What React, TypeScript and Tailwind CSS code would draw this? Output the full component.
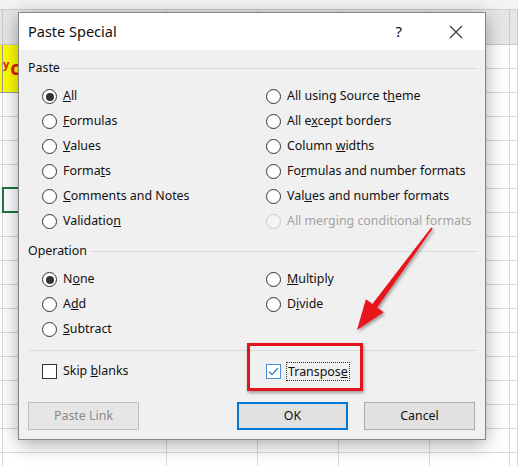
import React from 'react'

const COLS = [3, 164, 91, 81, 91, 80, 8]
const ROWS = 18

function Radio({
  checked = false,
  disabled = false,
  children,
}: {
  checked?: boolean
  disabled?: boolean
  children: React.ReactNode
}) {
  return (
    <div className="flex h-[25px] items-center">
      <span
        className={`flex h-[15px] w-[15px] items-center justify-center rounded-full border ${
          disabled ? 'border-[#cccccc] bg-[#f4f4f4]' : 'border-[#333333] bg-white'
        }`}
      >
        {checked && <span className="h-[8px] w-[8px] rounded-full bg-[#333333]" />}
      </span>
      <span className={`ml-[6px] ${disabled ? 'text-[#a3a3a3]' : 'text-[#111]'}`}>{children}</span>
    </div>
  )
}

function Section({ label }: { label: string }) {
  return (
    <div className="flex h-[18px] items-center">
      <span>{label}</span>
      <div className="ml-[4px] h-px flex-1 bg-[#dcdcdc]" />
    </div>
  )
}

function Sheet() {
  return (
    <div className="flex">
      {COLS.map((w, c) => (
        <div key={c} className="flex flex-col" style={{ width: w }}>
          <div className="h-[10px] border-b border-[#cfcfcf] bg-[#f3f3f3]" />
          <div className="h-[35px] border-r border-b border-[#c8c8c8] bg-[#e6e6e6]" />
          {Array.from({ length: ROWS }).map((_, r) => {
            if ((c === 0 || c === 1) && r === 1) return null
            if ((c === 0 || c === 1) && r === 0) {
              return (
                <div
                  key={r}
                  className="flex h-[48px] items-center overflow-hidden border-r border-b border-[#9a9a9a] bg-[#ffff00]"
                >
                  {c === 1 && (
                    <span className="flex items-center leading-none font-bold whitespace-nowrap text-[#e8190f]">
                      <span className="relative -top-[5px] text-[11px]">y</span>
                      <span className="ml-[1px] text-[19px]">c</span>
                    </span>
                  )}
                </div>
              )
            }
            return (
              <div key={r} className="relative h-[24px] shrink-0 border-r border-b border-[#dadada]">
                {c === 1 && r === 6 && (
                  <div className="absolute -top-[2px] -left-[1px] h-[26px] w-[166px] border-2 border-[#217346]" />
                )}
              </div>
            )
          })}
        </div>
      ))}
    </div>
  )
}

function Button({
  children,
  disabled = false,
  primary = false,
}: {
  children: React.ReactNode
  disabled?: boolean
  primary?: boolean
}) {
  return (
    <div
      className={`flex h-[28px] w-[111px] items-center justify-center ${
        primary
          ? 'border-2 border-[#0078d7] bg-[#e1e1e1] text-[#111]'
          : disabled
            ? 'border border-[#bfbfbf] bg-[#e6e6e6] text-[#8a8a8a]'
            : 'border border-[#adadad] bg-[#e1e1e1] text-[#111]'
      }`}
    >
      {children}
    </div>
  )
}

export default function App() {
  return (
    <div className="relative h-[466px] w-[518px] overflow-hidden bg-white font-['Noto_Sans','Liberation_Sans',sans-serif] text-[12.4px] text-[#111]">
      <Sheet />

      {/* dialog */}
      <div className="absolute top-[12px] left-[18px] flex h-[428px] w-[468px] flex-col border border-[#858585] bg-[#f0f0f0] shadow-[0_4px_18px_rgba(0,0,0,0.35)]">
        <div className="flex h-[37px] shrink-0 items-center bg-white pl-[9px]">
          <span className="text-[14.5px]">Paste Special</span>
          <span className="ml-auto text-[15px]">?</span>
          <svg className="mr-[22px] ml-[47px]" width="14" height="14" viewBox="0 0 14 14">
            <path d="M1 1 L13 13 M13 1 L1 13" stroke="#333" strokeWidth="1.1" fill="none" />
          </svg>
        </div>

        <div className="flex flex-1 flex-col pt-[9px] pr-[8px] pl-[9px]">
          <Section label="Paste" />
          <div className="mt-[7px] flex pl-[14px]">
            <div className="flex w-[224px] flex-col">
              <Radio checked>
                <u>A</u>ll
              </Radio>
              <Radio>
                <u>F</u>ormulas
              </Radio>
              <Radio>
                <u>V</u>alues
              </Radio>
              <Radio>
                Forma<u>t</u>s
              </Radio>
              <Radio>
                <u>C</u>omments and Notes
              </Radio>
              <Radio>
                Validatio<u>n</u>
              </Radio>
            </div>
            <div className="flex flex-col">
              <Radio>
                All using Source t<u>h</u>eme
              </Radio>
              <Radio>
                All e<u>x</u>cept borders
              </Radio>
              <Radio>
                Column <u>w</u>idths
              </Radio>
              <Radio>
                Fo<u>r</u>mulas and number formats
              </Radio>
              <Radio>
                Val<u>u</u>es and number formats
              </Radio>
              <Radio disabled>All merging conditional formats</Radio>
            </div>
          </div>

          <div className="mt-[8px]">
            <Section label="Operation" />
          </div>
          <div className="mt-[7px] flex pl-[14px]">
            <div className="flex w-[224px] flex-col">
              <Radio checked>
                N<u>o</u>ne
              </Radio>
              <Radio>
                A<u>d</u>d
              </Radio>
              <Radio>
                <u>S</u>ubtract
              </Radio>
            </div>
            <div className="flex flex-col">
              <Radio>
                <u>M</u>ultiply
              </Radio>
              <Radio>
                D<u>i</u>vide
              </Radio>
            </div>
          </div>

          <div className="mt-[8px] h-px bg-[#dcdcdc]" />

          <div className="mt-[8px] flex h-[25px] items-center pl-[14px]">
            <div className="flex w-[224px] items-center">
              <span className="h-[15px] w-[15px] border border-[#333333] bg-white" />
              <span className="ml-[6px]">
                Skip <u>b</u>lanks
              </span>
            </div>
            <div className="flex items-center">
              <span className="flex h-[15px] w-[15px] items-center justify-center border border-[#4a90d9] bg-white">
                <svg width="11" height="11" viewBox="0 0 11 11">
                  <path d="M1.2 5.8 L4 8.6 L9.8 2.2" stroke="#2a78c8" strokeWidth="1.3" fill="none" />
                </svg>
              </span>
              <span className="ml-[5px] border border-dotted border-[#333333] px-px leading-[17px]">
                Transpos<u>e</u>
              </span>
            </div>
          </div>

          <div className="mt-[18px] flex pr-[2px]">
            <Button disabled>Paste Link</Button>
            <div className="ml-auto flex gap-[16px]">
              <Button primary>OK</Button>
              <Button>Cancel</Button>
            </div>
          </div>
        </div>
      </div>

      {/* highlight box */}
      <div className="absolute top-[343px] left-[247px] h-[48px] w-[116px] border-[3.5px] border-[#e3141b] shadow-[1px_2px_3px_rgba(0,0,0,0.35)]" />

      {/* arrow */}
      <svg className="pointer-events-none absolute inset-0" width="518" height="466" viewBox="0 0 518 466">
        <defs>
          <filter id="sh" x="-20%" y="-20%" width="140%" height="140%">
            <feDropShadow dx="1.5" dy="2" stdDeviation="1.5" floodColor="#000" floodOpacity="0.35" />
          </filter>
        </defs>
        <polygon
          points="432.8,228.6 377.2,307.6 383.7,312.3 357,330 365.9,299.3 372.4,304 431.2,227.4"
          fill="#e8141b"
          filter="url(#sh)"
        />
      </svg>
    </div>
  )
}
